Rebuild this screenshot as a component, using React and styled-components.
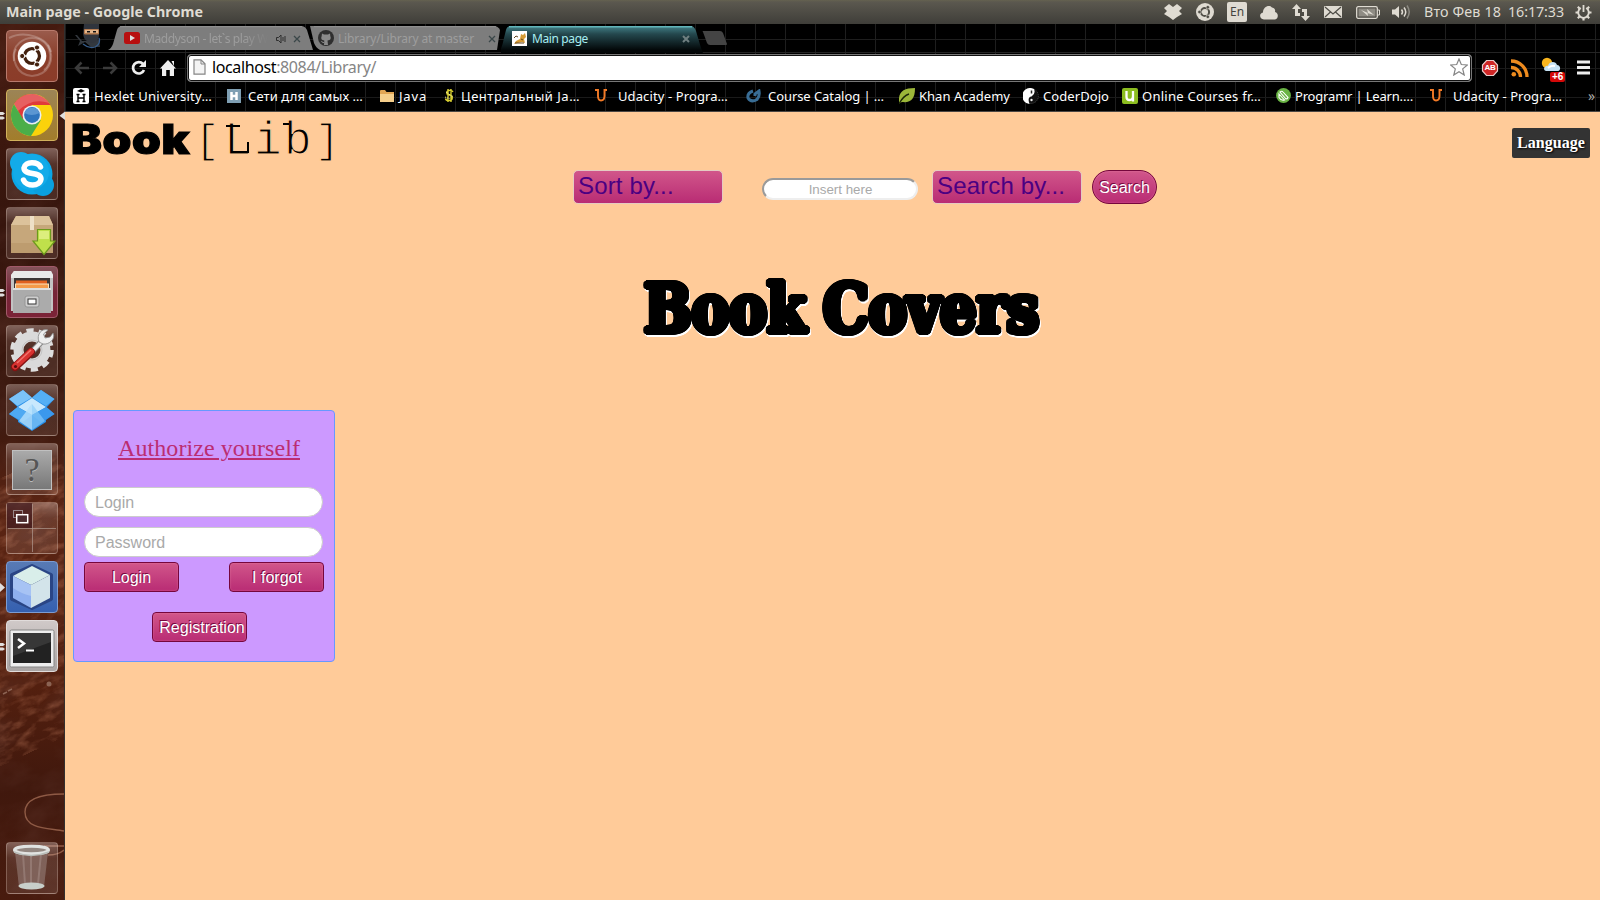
import React, { useLayoutEffect, useRef } from "react";
import styled, { createGlobalStyle, css } from "styled-components";

const Global = createGlobalStyle`
  *, *::before, *::after { box-sizing: border-box; }
  html, body, #root { margin: 0; width: 1600px; height: 900px; overflow: hidden; }
  body { background: #000; font-family: "Liberation Sans", sans-serif; }
  svg { display: block; flex: none; }
`;

const ui = `"Noto Sans", "Open Sans", sans-serif`;

/* ---------- text that spreads over a given width ---------- */
const FitBox = styled.span`
  display: block;
  flex: none;
  width: ${(p) => p.$w}px;
  white-space: pre;
`;
const FitInner = styled.span`
  display: inline-block;
  transform-origin: 0 50%;
`;
function Fit({ w, stretch, className, children }) {
  const ref = useRef(null);
  useLayoutEffect(() => {
    const el = ref.current;
    el.style.letterSpacing = stretch ? "" : "0px";
    el.style.transform = "none";
    const natural = el.getBoundingClientRect().width;
    const count = el.textContent.length;
    if (stretch) el.style.transform = `scaleX(${w / natural})`;
    else el.style.letterSpacing = `${(w - natural) / count}px`;
  }, [w, stretch]);
  return (
    <FitBox $w={w} className={className}>
      <FitInner ref={ref}>{children}</FitInner>
    </FitBox>
  );
}

/* ---------- frame ---------- */
const Desktop = styled.div`
  display: flex;
  flex-direction: column;
  width: 1600px;
  height: 900px;
  overflow: hidden;
`;
const Panel = styled.header`
  display: flex;
  align-items: center;
  justify-content: space-between;
  height: 24px;
  padding: 0 8px 0 6px;
  background: linear-gradient(#656250 0, #5b584f 2px, #3f3e39 100%);
  color: #dfdbd2;
  font-family: ${ui};
  line-height: 24px;
`;
const PanelTitle = styled(Fit)`
  font-size: 14.3px;
  font-weight: 700;
`;
const Tray = styled.div`
  display: flex;
  align-items: center;
  height: 24px;
`;
const TraySlot = styled.div`
  display: flex;
  justify-content: center;
  width: ${(p) => p.$w}px;
  padding-left: ${(p) => p.$pad || 0}px;
`;
const LangBadge = styled.div`
  width: 20px;
  height: 20px;
  border-radius: 2px;
  background: #dfdbd2;
  color: #45443f;
  font-size: 12px;
  line-height: 20px;
  text-align: center;
`;
const Clock = styled(Fit)`
  margin-left: ${(p) => p.$gap || 0}px;
  font-size: 14.3px;
`;
const Body = styled.div`
  display: flex;
  flex: 1;
  min-height: 0;
`;

/* ---------- launcher ---------- */
const Launcher = styled.nav`
  position: relative;
  display: flex;
  flex-direction: column;
  gap: 7px;
  width: 65px;
  padding: 6px 0 6px 6px;
  border-right: 1px solid #33302f;
  background: #3a170e;
`;
const Wallpaper = styled.svg`
  position: absolute;
  left: 0;
  top: 0;
`;
const Tile = styled.div`
  position: relative;
  width: 52px;
  height: 52px;
  flex: none;
  border: 1px solid ${(p) => p.$edge || "rgba(255,235,225,.25)"};
  border-radius: 4px;
  background: ${(p) => p.$bg || "linear-gradient(rgba(255,240,235,.32), rgba(255,240,235,.11) 30%, rgba(255,240,235,.1))"};
  ${(p) => p.$bottom && css`margin-top: auto;`}
  svg { position: absolute; left: -1px; top: -1px; }
`;
const Pip = styled.svg`
  && { position: absolute; left: ${(p) => p.$x}px; top: 17px; }
`;

/* ---------- browser ---------- */
const Browser = styled.main`
  display: flex;
  flex-direction: column;
  flex: 1;
  min-width: 0;
`;
const Chrome = styled.div`
  height: 88px;
  border-bottom: 1px solid #4a4745;
  background:
    linear-gradient(#1e1e1e, #1e1e1e) 0 15px / 100% 1px no-repeat,
    linear-gradient(#1a1a1a, #1a1a1a) 0 44px / 100% 1px no-repeat,
    linear-gradient(#1a1a1a, #1a1a1a) 0 73px / 100% 1px no-repeat,
    linear-gradient(90deg, #1e1e1e 1px, transparent 1px) 0 0 / 30px 100%,
    #000;
`;
const TabStrip = styled.div`
  display: flex;
  height: 29px;
  padding-left: 9px;
  font-family: ${ui};
  border-bottom: 1px solid #242424;
`;
const Tab = styled.div`
  position: relative;
  display: flex;
  align-items: center;
  width: ${(p) => p.$w}px;
  height: 29px;
  padding: 0 0 1px ${(p) => p.$pad}px;
  color: ${(p) => (p.$active ? "#a8eef2" : "#9d9d9d")};
  font-size: 12px;
  line-height: 27px;
`;
const TabShape = styled.svg`
  position: absolute;
  left: 0;
  top: 2px;
`;
const TabIcon = styled.div`
  position: relative;
  width: ${(p) => p.$w}px;
`;
const TabLabel = styled(Fit)`
  position: relative;
  ${(p) => p.$fade && css`mask-image: linear-gradient(90deg, #000 80%, transparent);`}
`;
const TabTail = styled.div`
  position: relative;
  display: flex;
  align-items: center;
  gap: 7px;
  margin-left: ${(p) => p.$gap}px;
  padding-top: 2px;
`;
const Toolbar = styled.div`
  display: flex;
  align-items: center;
  height: 29px;
  padding-left: 9px;
`;
const NavIcon = styled.div`
  width: ${(p) => p.$w}px;
`;
const Omnibox = styled.div`
  display: flex;
  align-items: center;
  width: 1285px;
  height: 28px;
  padding: 0 3px 2px 5px;
  border: 1px solid #777;
  border-radius: 4px;
  background: #fff;
  box-shadow: inset 0 0 0 1px #111;
  font-family: ${ui};
  font-size: 16px;
  line-height: 24px;
  color: #858585;
`;
const Url = styled(Fit)`
  margin-left: 6px;
  margin-right: auto;
  b { font-weight: 400; color: #000; }
`;
const Extensions = styled.div`
  position: relative;
  display: flex;
  align-items: center;
  gap: 12px;
  padding: 0 0 0 9px;
`;
const Bookmarks = styled.div`
  display: flex;
  align-items: center;
  height: 27px;
  padding-left: 8px;
  color: #fff;
  font-family: ${ui};
  font-size: 13px;
  line-height: 26px;
`;
const Bookmark = styled.div`
  display: flex;
  align-items: center;
  flex: none;
  width: ${(p) => p.$w}px;
`;
const BookmarkIcon = styled.div`
  width: ${(p) => p.$w}px;
`;
const More = styled.span`
  color: #aaa;
  font-size: 14px;
  margin-left: 2px;
`;

/* ---------- page ---------- */
const Page = styled.section`
  display: flex;
  flex-direction: column;
  flex: 1;
  padding: 0 10px 0 8px;
  background: #ffcb99;
`;
const Masthead = styled.div`
  display: flex;
  justify-content: space-between;
  height: 58px;
`;
const Logo = styled.div`
  display: flex;
  align-items: flex-start;
  color: #000;
`;
const LogoBook = styled(Fit)`
  font: 900 41px/60px Inter, sans-serif;
  letter-spacing: 0.6px;
  margin-top: -3px;
  margin-left: -2px;
  -webkit-text-stroke: 1.2px #000;
`;
const LogoLib = styled.div`
  margin-left: 4px;
  font: 400 46px/60px "Liberation Mono", monospace;
  letter-spacing: 2.4px;
  -webkit-text-stroke: 1.2px #ffcb99;
`;
const Bracket = styled.span`
  font-size: 41px;
  letter-spacing: 5.4px;
  position: relative;
  left: 1px;
  top: -1px;
`;
const Slab = styled.span`
  position: relative;
  &::before {
    content: "";
    position: absolute;
    left: ${(p) => p.$x}px;
    top: ${(p) => p.$y}px;
    width: ${(p) => p.$w}px;
    height: 2px;
    background: #000;
  }
  &::after {
    content: "";
    display: ${(p) => (p.$tick ? "block" : "none")};
    position: absolute;
    right: 5px;
    bottom: 15px;
    width: 2px;
    height: 11px;
    background: #000;
  }
`;
const Language = styled.button`
  width: 78px;
  height: 30px;
  margin-top: 16px;
  padding: 0 0 0 5px;
  border: 0;
  border-radius: 2px;
  background: #333;
  color: #fff;
  font: bold 16px/30px "Liberation Serif", serif;
  text-align: left;
  text-shadow: 1px 1px 2px #000;
`;
const Filters = styled.div`
  display: flex;
  align-items: center;
  height: 34px;
  padding-left: 500px;
`;
const pink = css`
  background: linear-gradient(#d1568a, #b92c74);
`;
const Select = styled.button`
  width: 150px;
  height: 34px;
  padding: 0 0 2px 4px;
  border: 1px solid #e5cbc2;
  border-radius: 5px;
  ${pink}
  color: #4b0082;
  font: 24px/28px "Liberation Sans", sans-serif;
  letter-spacing: 0.15px;
  text-align: left;
`;
const Query = styled.input`
  width: 156px;
  height: 22px;
  margin: 4px 14px 0 39px;
  padding: 0 0 0 1px;
  border: 2px solid;
  border-color: #9a9a9a #eee #eee #9a9a9a;
  border-radius: 11px;
  background: #fff;
  font: 13.33px "Liberation Sans", sans-serif;
  text-align: center;
  &::placeholder { color: #a9a9a9; opacity: 1; }
`;
const Button = styled.button`
  width: ${(p) => p.$w || 95}px;
  height: ${(p) => p.$h || 30}px;
  padding: ${(p) => p.$pad || "2px 0 0"};
  border: 1px solid #76063c;
  border-radius: ${(p) => p.$r || 4}px;
  ${pink}
  box-shadow: inset 0 0 2px rgba(255, 170, 200, .45);
  color: #fff;
  font: 16px/26px "Liberation Sans", sans-serif;
  text-shadow: -1px -1px 0 #76063c;
  white-space: nowrap;
  ${(p) => p.$gap && css`margin-left: ${p.$gap}px;`}
`;
/* a ring of offset copies thickens the letters and rounds their corners */
const ring = Array.from({ length: 24 }, (_, i) => {
  const a = (i * Math.PI) / 12;
  return `${(Math.cos(a) * 3.6).toFixed(2)}px ${(Math.sin(a) * 2.7).toFixed(2)}px 0 #000`;
}).join(",");
const Heading = styled.h1`
  display: flex;
  gap: 17px;
  height: 90px;
  margin: 60px 0 0 571px;
  color: #000;
  font: bold 67px/90px "DejaVu Serif", serif;
  text-shadow: ${ring};
  filter: drop-shadow(1px 2px 0 #fff);
`;
const Card = styled.form`
  display: flex;
  flex-direction: column;
  width: 262px;
  height: 252px;
  margin-top: 56px;
  padding: 18px 10px 0;
  border: 1px solid #6699ff;
  border-radius: 4px;
  background: #cc99ff;
`;
const CardTitle = styled(Fit)`
  height: 58px;
  margin-left: 34px;
  color: #bb2d72;
  font: 24px/38px "Liberation Serif", serif;
  text-decoration: underline;
  text-decoration-thickness: 2px;
  text-underline-offset: 2px;
  span { text-decoration: inherit; }
`;
const Field = styled.input`
  flex: none;
  width: 239px;
  height: 30px;
  margin: 0 0 10px;
  padding: 2px 10px 0;
  border: 1px solid #ccc;
  border-radius: 15px;
  background: #fff;
  font: 16px "Liberation Sans", sans-serif;
  &::placeholder { color: #a9a9a9; opacity: 1; }
`;
const Actions = styled.div`
  display: flex;
  justify-content: ${(p) => (p.$center ? "flex-start" : "space-between")};
  width: 240px;
  margin-top: ${(p) => p.$top}px;
  padding-left: ${(p) => (p.$center ? 68 : 0)}px;
`;

/* ---------- drawings ---------- */
const c = "#dfdbd2";
const Svg = ({ w, h = w, vw = w, vh = h, children }) => (
  <svg width={w} height={h} viewBox={`0 0 ${vw} ${vh}`} fill="none">{children}</svg>
);
const DropTray = () => <Svg w={18} h={16}><path d="M5 0 9 3 13 0 18 4 15 7 18 10 13 13 9 16 5 13 0 10 3 7 0 4Z" fill={c} /></Svg>;
const UbuntuTray = () => (
  <Svg w={18}>
    <circle cx="9" cy="9" r="9" fill={c} />
    <circle cx="9" cy="9" r="4.1" stroke="#504e47" strokeWidth="2" />
    <g fill="#504e47" stroke={c} strokeWidth=".7"><circle cx="3.5" cy="9" r="1.8" /><circle cx="11.8" cy="4.2" r="1.8" /><circle cx="11.8" cy="13.8" r="1.8" /></g>
  </Svg>
);
const Cloud = () => <Svg w={18} h={15}><path d="M4 14.5C-1 14-1 8 3 7.500C3 2 9-1 12 2.500 15 3 15.500 5 15 7 19 8 18.500 14 15 14.500Z" fill={c} /></Svg>;
const Updown = () => <Svg w={18} h={17}><path d="M4.500 0 9 5H6V12H3V5H0ZM13.500 17 9 12H12V5H15V12H18ZM6 9V12H8V9ZM10 5H12V8H10Z" fill={c} /></Svg>;
const Mail = () => <Svg w={18} h={12}><rect width="18" height="12" rx="1" fill={c} /><path d="M1 1 9 8 17 1M1 11 6.500 6M17 11 11.500 6" stroke="#4e4c46" strokeWidth="1.2" /></Svg>;
const Battery = () => (
  <Svg w={24} h={13}>
    <rect x=".7" y=".7" width="20.600" height="11.600" rx="1.500" stroke={c} strokeWidth="1.300" /><rect x="2.500" y="2.500" width="17" height="8" fill="#8f8c84" />
    <path d="M22 4h1.500v5H22" stroke={c} /><path d="M5 4 12 7 11 3 18 9 11.500 7 12 10Z" fill={c} />
  </Svg>
);
const Sound = () => <Svg w={19} h={16}><path d="M0 5.500H3L7 2V14L3 10.500H0Z" fill={c} /><path d="M9.500 5.500q2 2.500 0 5M12 3.500q3.500 4.500 0 9" stroke={c} strokeWidth="1.500" /><path d="M15 1.500q4.500 6.500 0 13" stroke="#8b8981" strokeWidth="1.500" /></Svg>;
const Power = () => (
  <Svg w={17}>
    <g stroke={c} strokeWidth="2">
      <path d="M8.500 1v7" strokeWidth="1.800" /><path d="M5.800 4a5.300 5.300 0 1 0 5.400 0" strokeWidth="1.900" />
      <path d="M.5 8.500H3M14 8.500h2.500M8.500 14v2.500M2.800 14.200 4.500 12.500M14.200 14.200 12.500 12.500M2.800 2.800 4.500 4.500M14.200 2.800 12.500 4.500" strokeWidth="2.200" />
    </g>
  </Svg>
);

const Texture = () => (
  <Wallpaper width="64" height="876" viewBox="0 0 64 876">
    <defs>
      <linearGradient id="wall" x1="0" y1="0" x2="0" y2="1">
        <stop offset="0" stopColor="#451a0f" /><stop offset=".22" stopColor="#36150d" /><stop offset=".45" stopColor="#3b180e" />
        <stop offset=".55" stopColor="#5a2413" /><stop offset=".75" stopColor="#54200f" /><stop offset=".87" stopColor="#40180d" /><stop offset="1" stopColor="#481b0e" />
      </linearGradient>
      <filter id="grain" x="0" y="0" width="1" height="1">
        <feTurbulence type="fractalNoise" baseFrequency=".06 .14" numOctaves="5" seed="8" />
        <feColorMatrix values="0 0 0 0 .58  0 0 0 0 .22  0 0 0 0 .12  1.400 0 0 0 -.6" />
      </filter>
      <filter id="shade" x="0" y="0" width="1" height="1">
        <feTurbulence type="fractalNoise" baseFrequency=".02 .035" numOctaves="5" seed="21" />
        <feColorMatrix values="0 0 0 0 .1  0 0 0 0 .03  0 0 0 0 .02  0 1.500 0 0 -.6" />
      </filter>
    </defs>
    <rect width="64" height="876" fill="url(#wall)" />
    <g transform="rotate(-25 32 438)"><rect x="-220" y="-10" width="500" height="900" filter="url(#shade)" opacity=".7" />
      <rect x="-220" y="440" width="500" height="260" filter="url(#grain)" opacity=".6" /></g>
    <path d="M64 770C36 770 25 777 25 788C25 806 50 804 64 807M44 822H64M48 831Q58 831 64 826" fill="none" stroke="#8e5a45" strokeWidth="1.400" />
    <circle cx="49" cy="660" r="2.500" fill="#8b6353" /><path d="M3 670l4-2M8 667l4-2" stroke="#8b6353" strokeWidth="1.500" />
  </Wallpaper>
);
const LeftPips = ({ two }) => (
  <Pip $x={-7} width="6" height="16" fill="#e0dedd">
    {two ? <path d="M0 5H3L5 6.500 3 8H0ZM0 9.500H3L5 11 3 12.500H0Z" /> : <path d="M0 4 5 8.500 0 13Z" />}
  </Pip>
);
const UbuntuIcon = () => (
  <Svg w={52}>
    <g stroke="#fff" strokeOpacity=".22" strokeWidth="2"><path d="M8 31C5 15 18 5 33 9 48 16 46 34 38 40" /><path d="M42 15C50 30 42 45 26 46 10 45 5 28 10 19" /><path d="M3 8C18 0 42 7 45 22" /></g>
    <circle cx="26" cy="26" r="14.300" fill="#fff" />
    <circle cx="26" cy="26" r="7.400" stroke="#43210f" strokeWidth="3.400" />
    <path d="M26 26 12 26M26 26 33 38M26 26 33 14" stroke="#fff" strokeWidth="1.500" />
    <circle cx="26" cy="26" r="5.500" fill="#fff" />
    <g fill="#43210f" stroke="#fff" strokeWidth="1"><circle cx="16.200" cy="26" r="2.600" /><circle cx="31" cy="17.500" r="2.600" /><circle cx="31" cy="34.500" r="2.600" /></g>
  </Svg>
);
const ChromeIcon = () => (
  <Svg w={52}>
    <circle cx="26" cy="26" r="21" fill="#fbd20b" />
    <path d="M8 15A21 21 0 0 1 44.300 16H26L17 31Z" fill="#e0393a" />
    <path d="M8 15.200A21 21 0 0 0 25 47L35 31 26 34 17 30Z" fill="#4bae49" />
    <path d="M8 15A21 21 0 0 1 43 14Q26 8 12 22Z" fill="#fff" opacity=".2" />
    <circle cx="26" cy="26" r="9.500" fill="#e9eef2" /><circle cx="26" cy="26" r="7.900" fill="#2f74bd" /><path d="M18.500 24a8 8 0 0 1 15 0q-8 4-15 0" fill="#5b96d2" />
  </Svg>
);
const SkypeIcon = () => (
  <Svg w={52}>
    <circle cx="26" cy="26" r="20.500" fill="#0aa6e6" /><circle cx="15" cy="15" r="11" fill="#13abe9" /><circle cx="37" cy="37" r="11" fill="#0aa0df" />
    <circle cx="25" cy="24" r="18" fill="#13abe9" />
    <path d="M34.500 19C32 13.500 19 13 18 20 18 28 35 23 35 31 34 39 20 38.500 17.500 32" stroke="#fff" strokeWidth="5.500" strokeLinecap="round" />
  </Svg>
);
const BoxIcon = () => (
  <Svg w={52}>
    <path d="M10 9H43L47 18V46H5V18Z" fill="#c6a77b" /><path d="M10 9H43L47 18H5Z" fill="#dcc29b" /><path d="M5 36H47V46H5Z" fill="#b89467" opacity=".6" />
    <path d="M24 9h4v14h-4z" fill="#eee0c8" />
    <path d="M31.500 22.500H44.500V34H49L38 47.500 27 34H31.500Z" fill="#bfe04b" stroke="#6c9a1c" strokeWidth="1.200" /><path d="M33 24h10v8H33z" fill="#dcee7d" />
  </Svg>
);
const FilesIcon = () => (
  <Svg w={52}>
    <path d="M8 5H45L47 9V45H5V9Z" fill="#c3c3c3" /><path d="M8 5H45L47 9V12H5V9Z" fill="#e9e9e9" /><path d="M8 12H44V24H8Z" fill="#3b3535" />
    <path d="M10 14.500H41V23H10Z" fill="#e0601f" /><path d="M9 17.500H43V23H9Z" fill="#f9e2bd" /><path d="M10 18.500H42V23H10Z" fill="#f49a4a" />
    <path d="M7 22H45V47H7Z" fill="#ababab" /><path d="M7 22H45V24H7Z" fill="#dedede" /><rect x="19" y="30" width="14" height="11" rx="2" fill="#cecece" stroke="#949494" /><rect x="22" y="33" width="8" height="5" fill="#fff" stroke="#333" />
  </Svg>
);
const GearIcon = () => (
  <Svg w={52}>
    <circle cx="26" cy="25" r="19" stroke="#dedede" strokeWidth="5.500" strokeDasharray="7 4.940" /><circle cx="26" cy="25" r="13.500" stroke="#dadada" strokeWidth="10" /><circle cx="26" cy="25" r="10" stroke="#c4c4c4" strokeWidth="1" />
    <path d="M22 31 38 14" stroke="#858585" strokeWidth="6" /><path d="M22 31 38 14" stroke="#eee" strokeWidth="4" />
    <path d="M33 17C30 9 36 3 42 5L37.500 9 39 13 44 12 47 8C50 14 43 20 37 19Z" fill="#eee" stroke="#888" strokeWidth=".8" />
    <path d="M9 42 25 27" stroke="#841212" strokeWidth="8" strokeLinecap="round" /><path d="M9 41.500 25 26.500" stroke="#d83230" strokeWidth="6" strokeLinecap="round" /><path d="M11 38 25 25" stroke="#f1726c" strokeWidth="1.500" /><circle cx="9.500" cy="41.500" r="1.600" fill="#5c0d0d" />
  </Svg>
);
const DropboxIcon = () => (
  <Svg w={52}>
    <path d="M17 6 26 14 35 6 48.500 15 40.500 23.500 48.500 30 40 36V38L26 47 12 38V36L3 30 11.500 23 3 15Z" fill="#278ee8" />
    <path d="M17 6 26 13.500 11.500 22 3 15Z" fill="#7bc3f8" /><path d="M35 6 48.500 15 40 22 26 13.500Z" fill="#54aff5" /><path d="M26 14 40 23 26 31 12 23Z" fill="#c8e8fd" /><path d="M11.500 23 26 31 17 38 3 30Z" fill="#4ea9f2" /><path d="M40.500 23 48.500 30 35 38 26 31Z" fill="#3b98ec" />
    <path d="M26 20 39 37 26 46 13 37Z" fill="#8bcbf9" opacity=".65" /><path d="M26 20V46L13 37Z" fill="#d5effe" opacity=".45" />
  </Svg>
);
const Mark = styled.span`
  position: absolute;
  left: 5px;
  top: 6px;
  width: 40px;
  height: 40px;
  border: 1px solid #c0c0c0;
  background: linear-gradient(#aaa, #787878);
  color: #555;
  font: 34px/38px "Liberation Serif", serif;
  text-align: center;
  text-shadow: 0 1px 0 #bbb;
`;
const SpacesIcon = () => (
  <Svg w={52}><path d="M1 1H26V26H1Z" fill="#3d1418" opacity=".7" /><path d="M26.500 2V50M2 26.500H50" stroke="#b09a90" strokeOpacity=".7" /><rect x="7.500" y="8.500" width="9" height="7" stroke="#99888a" /><rect x="10.700" y="12.700" width="11" height="8" fill="#4d2d30" stroke="#fff" strokeWidth="1.500" /></Svg>
);
const CubeIcon = () => (
  <Svg w={52}>
    <path d="M26 5 45 14V38L26 47 6 38V14Z" fill="#1c2d5f" stroke="#2a4585" strokeWidth="4" strokeLinejoin="round" />
    <path d="M26 5 44 14 25 24 7 15Z" fill="#d9eeea" /><path d="M7 15 25 24V47L7 37Z" fill="#8fb0ef" /><path d="M44 14 25 24V47L44 37Z" fill="#d3e4ea" /><path d="M7 15 25 24V35Q14 32 7 27Z" fill="#c0d5f9" opacity=".5" />
  </Svg>
);
const TerminalIcon = () => (
  <Svg w={52}><rect x="4" y="10" width="44" height="37" rx="1.500" fill="#eee" stroke="#858585" /><rect x="7" y="13" width="38" height="30" fill="#222" /><path d="M7 13H45V22L7 36Z" fill="#484848" opacity=".55" /><path d="M12 19 18 23.500 12 28" stroke="#fff" strokeWidth="2.500" /><path d="M20 30.500h8" stroke="#fff" strokeWidth="2" /></Svg>
);
const TrashIcon = () => (
  <Svg w={52}><path d="M9 10H42L38 45H13Z" fill="#9a8580" opacity=".55" /><path d="M17 12 19 42M25 12V42M35 12 32 42" stroke="#d1bfba" opacity=".25" strokeWidth="2" /><ellipse cx="25.500" cy="8" rx="17" ry="3.700" stroke="#e1e3e1" strokeWidth="3" fill="#938781" /><path d="M8 10Q25 17 43 10" stroke="#b8bdb9" strokeWidth="1.500" /><ellipse cx="25.500" cy="44" rx="13" ry="3.500" fill="#c8cfca" /></Svg>
);

/* browser icons */
const Ninja = () => (
  <Svg w={32} h={25}><path d="M1 11 6 17 4 22 11 18 17 23H26L25 16 8 17 3 11Z" fill="#33383e" /><path d="M10 0H25V11Q25 18 18 19 10 18 9 10Z" fill="#30353d" /><path d="M9 20Q15 25 21 23 27 20 25 14" stroke="#365c8a" strokeWidth="1.300" /><rect x="10" y="5" width="15" height="5.500" rx="1" fill="#b67d51" /><rect x="11" y="6" width="13" height="3" fill="#e3b58c" /><path d="M13 7h3v1.500h-3zM19 7h3v1.500h-3z" fill="#111" /></Svg>
);
const Youtube = () => <Svg w={16} h={12}><rect width="16" height="12" rx="2.500" fill="#b80f0f" /><path d="M6 3 11 6 6 9Z" fill="#ddd" /></Svg>;
const Github = () => <Svg w={16}><circle cx="8" cy="8" r="8" fill="#2f2f2f" /><path d="M4 3.500 6 4.500H10L12 3.500 12.300 6Q14 10 9.500 10.500L10 15H6L6.300 10.500Q2 10 3.700 6Z" fill="#8a8a8a" /><path d="M6 12.500Q4 13 3.500 11" stroke="#8a8a8a" /></Svg>;
const CatIcon = () => <Svg w={15}><rect width="15" height="15" fill="#fff" /><path d="M9 3 11 4 13 2 14 6 12 8 13 12 10 11 6 12 2 13 4 10 8 8Z" fill="#d59b35" /><path d="M2 7 4 5 6 6M3 12 12 12M9 8 11 9" stroke="#614721" /></Svg>;
const Cross = ({ active }) => <Svg w={8}><path d="M1 1 7 7M7 1 1 7" stroke={active ? "#6f7f80" : "#3b4749"} strokeWidth={active ? 2 : 1.3} /></Svg>;
const Speaker = () => <Svg w={10}><path d="M.5 3.500H2.500L5 1V9L2.500 6.500H.5Z" stroke="#2e2e2e" /><path d="M7 3v4M9 2v6" stroke="#2e2e2e" /></Svg>;
const Arrow = ({ flip }) => <Svg w={15} h={14}><path d={flip ? "M0 7H12M7.500 1.500 13 7 7.500 12.500" : "M15 7H3M7.500 1.500 2 7 7.500 12.500"} stroke="#3b3b3b" strokeWidth="2.500" /></Svg>;
const Reload = () => <Svg w={16}><path d="M12 4A5.700 5.700 0 1 0 13 10" stroke="#eee" strokeWidth="2.700" /><path d="M15 0V7H8Z" fill="#eee" /></Svg>;
const Home = () => <Svg w={16}><path d="M8 0 16 8.500H14V16H9.800V10H6.200V16H2V8.500H0ZM11.500 1H14V6Z" fill="#eee" /></Svg>;
const Doc = () => <Svg w={13} h={16}><path d="M1 .8H8L12 4.800V15.200H1Z" fill="#f4f4f4" stroke="#858585" strokeWidth="1.200" /><path d="M8 1V5H12" stroke="#858585" /></Svg>;
const Star = () => <Svg w={18}><path d="M9 1 11.300 6.500 17.300 7 12.700 10.900 14.200 17 9 13.700 3.800 17 5.300 10.900 .7 7 6.700 6.500Z" stroke="#858585" strokeWidth="1.200" /></Svg>;
const BadgeText = styled.span`
  position: absolute;
  left: ${(p) => p.$x}px;
  top: ${(p) => p.$y}px;
  width: ${(p) => p.$w}px;
  height: ${(p) => p.$h}px;
  border-radius: 2px;
  background: ${(p) => p.$bg};
  color: #fff;
  font: bold ${(p) => p.$size}px/${(p) => p.$h}px "Liberation Sans", sans-serif;
  letter-spacing: -0.3px;
  text-align: center;
`;
const Stop = () => <Svg w={18}><path d="M5.500 1.500H12.500L16.500 6V12L12.500 16.500H5.500L1.500 12V6Z" fill="#cf2626" stroke="#e8caca" strokeWidth="1.200" /></Svg>;
const Rss = () => <Svg w={18}><circle cx="2.800" cy="15.200" r="2.300" fill="#ee8b1e" /><path d="M0 8.500A9.500 9.500 0 0 1 9.500 18M0 2A16 16 0 0 1 16 18" stroke="#ee8b1e" strokeWidth="3.300" /></Svg>;
const Weather = () => <Svg w={24} h={22}><circle cx="6" cy="6" r="5.200" fill="#f9b51d" /><path d="M5 14C1 13 4 8 7 9 8 4 15 4 16 8 20 8 20 14 17 14Z" fill="#c4e1f4" /><path d="M7 11Q10 8 14 9" stroke="#fff" strokeWidth="2" /></Svg>;
const Menu = () => <Svg w={13} h={15}><path d="M0 2H13M0 7.500H13M0 13H13" stroke="#eee" strokeWidth="3.200" /></Svg>;

const HexletI = () => <Svg w={16}><rect width="16" height="16" rx="2" fill="#fff" /><path d="M8 1 12 3 8 4.500 4 3Z" fill="#000" /><path d="M5 6.500V14M11 6.500V14M5 10H11M3.500 6.500H6.500M9.500 6.500H12.500M3.500 13.500H6.500M9.500 13.500H12.500" stroke="#000" strokeWidth="1.400" /></Svg>;
const HabrI = () => <Svg w={14}><rect width="14" height="14" fill="#7f9fb3" /><path d="M4.500 3V11M9.500 3V11M4.500 7H9.500" stroke="#fff" strokeWidth="2.500" /></Svg>;
const FolderI = () => <Svg w={16} h={14}><path d="M1 2Q1 1 2 1H6L7.500 3H15V13H1Z" fill="#e1a554" /><path d="M1 5H15V13H1Z" fill="#f5ce8b" /></Svg>;
const DollarI = () => <Svg w={11} h={13}><path d="M9 3Q8 1 5 1.500 2 2 3 5L8 7Q9 11 6 11.500 2 12 1.500 9.500M4 0V13M7 0V13" stroke="#d8cf31" strokeWidth="1.400" /><path d="M2 3 9 8M1 8 6 10" stroke="#f1eeb0" strokeDasharray="1 1" /></Svg>;
const UdacityI = () => <Svg w={12} h={13}><path d="M0 1H3V7Q3 11.500 6 11.500 9.500 11.500 9.500 7V1H12" stroke="#f37a26" strokeWidth="1.900" /></Svg>;
const CourseI = () => <Svg w={16} h={14}><path d="M7 2Q1 4 2 9 5 14 11 10.500 14 7 13 2L9 5V7" stroke="#396d95" strokeWidth="3" /></Svg>;
const LeafI = () => <Svg w={16}><path d="M0 15C-1 4 4 0 16 0 16 11 12 15 3 14Z" fill="#9cb739" /><path d="M0 16Q4 8 10 6" stroke="#1c2708" strokeWidth="1.400" /></Svg>;
const YinI = () => <Svg w={16}><circle cx="8" cy="8" r="7.400" fill="#111" stroke="#4a4a4a" strokeDasharray="1 1" /><path d="M8 0A8 8 0 0 0 6.500 16Q4 9 8.500 8.500 13 6 11 1Z" fill="#fff" /><path d="M8.500 2.500v3" stroke="#222" strokeWidth="1.500" /><circle cx="8.500" cy="12" r="1.200" fill="#eee" /></Svg>;
const OnlineI = () => <Svg w={16}><rect width="16" height="16" rx="2" fill="#8cbd20" /><path d="M4.500 3V9Q4.500 12 7.500 12 11 12 11 8V3M11 8V13.500" stroke="#fff" strokeWidth="2.300" /></Svg>;
const ProgI = () => <Svg w={15}><circle cx="7.500" cy="7.500" r="7.400" fill="#69b444" /><path d="M4 4Q6 2.500 7 4L12 9.500Q11.500 11 10 11ZM3 6 8.500 12Q5 13 3 9.500Z" stroke="#fff" strokeWidth="1.100" /></Svg>;

/* icon, icon slot, label width, whole item width, label */
const bookmarks = [
  [HexletI, 21, 118, 154, "Hexlet University…"],
  [HabrI, 21, 115, 152, "Сети для самых …"],
  [FolderI, 20, 28, 65, "Java"],
  [DollarI, 17, 119, 151, "Центральный Ja…"],
  [UdacityI, 23, 110, 151, "Udacity - Progra…"],
  [CourseI, 22, 116, 153, "Course Catalog | …"],
  [LeafI, 20, 91, 124, "Khan Academy"],
  [YinI, 20, 66, 99, "CoderDojo"],
  [OnlineI, 20, 119, 154, "Online Courses fr…"],
  [ProgI, 19, 118, 154, "Programr | Learn.…"],
  [UdacityI, 23, 109, 156, "Udacity - Progra…"],
];

const plain = undefined;
const tiles = [
  [UbuntuIcon, "linear-gradient(#9a5b4c, #8b3f2b 50%, #8b3c29)", "#b87a6c"],
  [ChromeIcon, "linear-gradient(#9c8456, #a27d2b)", "#d2b25c", "two"],
  [SkypeIcon],
  [BoxIcon],
  [FilesIcon, "linear-gradient(#84535a, #762537 50%, #7b2337)", "#a15969", "two"],
  [GearIcon],
  [DropboxIcon],
  [null, plain, plain],
  [SpacesIcon],
  [CubeIcon, "linear-gradient(#587ab4, #3560b0)", "#7c9cd2", "one"],
  [TerminalIcon, "linear-gradient(#d0c9c8, #a9a4a3)", "#e1dcdb", "two"],
];

export default function App() {
  return (
    <Desktop>
      <Global />
      <Panel>
        <PanelTitle w={197}>Main page - Google Chrome</PanelTitle>
        <Tray>
          <TraySlot $w={32}><DropTray /></TraySlot>
          <TraySlot $w={32}><UbuntuTray /></TraySlot>
          <TraySlot $w={32}><LangBadge>En</LangBadge></TraySlot>
          <TraySlot $w={32}><Cloud /></TraySlot>
          <TraySlot $w={32}><Updown /></TraySlot>
          <TraySlot $w={32}><Mail /></TraySlot>
          <TraySlot $w={38}><Battery /></TraySlot>
          <TraySlot $w={29}><Sound /></TraySlot>
          <Clock w={77} $gap={8}>Вто Фев 18</Clock>
          <Clock w={56} $gap={7}>16:17:33</Clock>
          <TraySlot $w={28} $pad={11}><Power /></TraySlot>
        </Tray>
      </Panel>
      <Body>
        <Launcher>
          <Texture />
          {tiles.map(([Icon, bg, edge, pips], i) => (
            <Tile key={i} $bg={bg} $edge={edge}>
              {pips && <LeftPips two={pips === "two"} />}
              {i === 1 && <Pip $x={52} width="6" height="16" fill="#e0dedd"><path d="M6 4.500V13L.5 8.700Z" /></Pip>}
              {Icon ? <Icon /> : <Mark>?</Mark>}
            </Tile>
          ))}
          <Tile $bottom><TrashIcon /></Tile>
        </Launcher>
        <Browser>
          <Chrome>
            <TabStrip>
              <Ninja />
              <Tab $w={202} $pad={18}>
                <TabShape width="208" height="25">
                  <path d="M2 24Q5 23 7 18L11 4Q12 0 17 0H195Q199 0 201 4L207 24Z" fill="#7d7d7d" /><path d="M14 .7H196" stroke="#959595" />
                </TabShape>
                <TabIcon $w={20}><Youtube /></TabIcon>
                <TabLabel w={124} $fade>Maddyson - let`s play W</TabLabel>
                <TabTail $gap={8}><Speaker /><Cross /></TabTail>
              </Tab>
              <Tab $w={193} $pad={10}>
                <TabShape width="200" height="25">
                  <path d="M2 0H186Q190 0 192 4L189 24H12Q8 22 6 17Z" fill="#7d7d7d" /><path d="M6 .7H188" stroke="#959595" />
                </TabShape>
                <TabIcon $w={20}><Github /></TabIcon>
                <TabLabel w={136}>Library/Library at master</TabLabel>
                <TabTail $gap={14}><Cross /></TabTail>
              </Tab>
              <Tab $w={201} $pad={11} $active>
                <TabShape width="202" height="27">
                  <defs><linearGradient id="act" x1="0" y1="0" x2="0" y2="1"><stop offset="0" stopColor="#438188" /><stop offset=".3" stopColor="#24474d" /><stop offset=".9" stopColor="#020607" /></linearGradient></defs>
                  <path d="M-2 27Q1 22 3 12L5 4Q6 0 10 0H190Q193 0 195 5L200 22 202 27Z" fill="url(#act)" /><path d="M8 .7H191" stroke="#62b5ba" strokeWidth="1.400" />
                </TabShape>
                <TabIcon $w={20}><CatIcon /></TabIcon>
                <TabLabel w={56}>Main page</TabLabel>
                <TabTail $gap={94}><Cross active /></TabTail>
              </Tab>
              <Svg w={26} h={22}><path d="M1 8Q0 7 1 7H18Q20 7 21 9L25 20Q25 21 24 21H8Q6 21 5 19Z" fill="#444" /></Svg>
            </TabStrip>
            <Toolbar>
              <NavIcon $w={29}><Arrow /></NavIcon>
              <NavIcon $w={28}><Arrow flip /></NavIcon>
              <NavIcon $w={29}><Reload /></NavIcon>
              <NavIcon $w={27}><Home /></NavIcon>
              <Omnibox>
                <Doc />
                <Url w={164}><b>localhost</b>:8084/Library/</Url>
                <Star />
              </Omnibox>
              <Extensions>
                <Stop />
                <BadgeText $x={11} $y={7} $w={14} $h={7} $size={8} $bg="transparent">AB</BadgeText>
                <Rss />
                <Weather />
                <BadgeText $x={78} $y={15} $w={15} $h={10} $size={10} $bg="#d40808">+6</BadgeText>
                <Menu />
              </Extensions>
            </Toolbar>
            <Bookmarks>
              {bookmarks.map(([Icon, slot, w, total, label], i) => (
                <Bookmark key={i} $w={total}>
                  <BookmarkIcon $w={slot}><Icon /></BookmarkIcon>
                  <Fit w={w}>{label}</Fit>
                </Bookmark>
              ))}
              <More>»</More>
            </Bookmarks>
          </Chrome>
          <Page>
            <Masthead>
              <Logo>
                <LogoBook w={119} stretch>Book</LogoBook>
                <LogoLib><Bracket>[</Bracket><Slab $x={2} $y={9} $w={14} $tick>L</Slab>i<Slab $x={-1} $y={7} $w={6}>b</Slab><Bracket>]</Bracket></LogoLib>
              </Logo>
              <Language><Fit w={68}>Language</Fit></Language>
            </Masthead>
            <Filters>
              <Select>Sort by...</Select>
              <Query placeholder="Insert here" />
              <Select>Search by...</Select>
              <Button $w={65} $h={34} $r={17} $gap={10}>Search</Button>
            </Filters>
            <Heading><Fit w={162} stretch>Book</Fit><Fit w={216} stretch>Covers</Fit></Heading>
            <Card>
              <CardTitle w={182}>Authorize yourself</CardTitle>
              <Field placeholder="Login" />
              <Field placeholder="Password" />
              <Actions $top={-5}>
                <Button type="button">Login</Button>
                <Button type="button" $pad="2px 0 0 1px">I forgot</Button>
              </Actions>
              <Actions $top={20} $center>
                <Button type="button" $pad="2px 0 0 5px">Registration</Button>
              </Actions>
            </Card>
          </Page>
        </Browser>
      </Body>
    </Desktop>
  );
}
